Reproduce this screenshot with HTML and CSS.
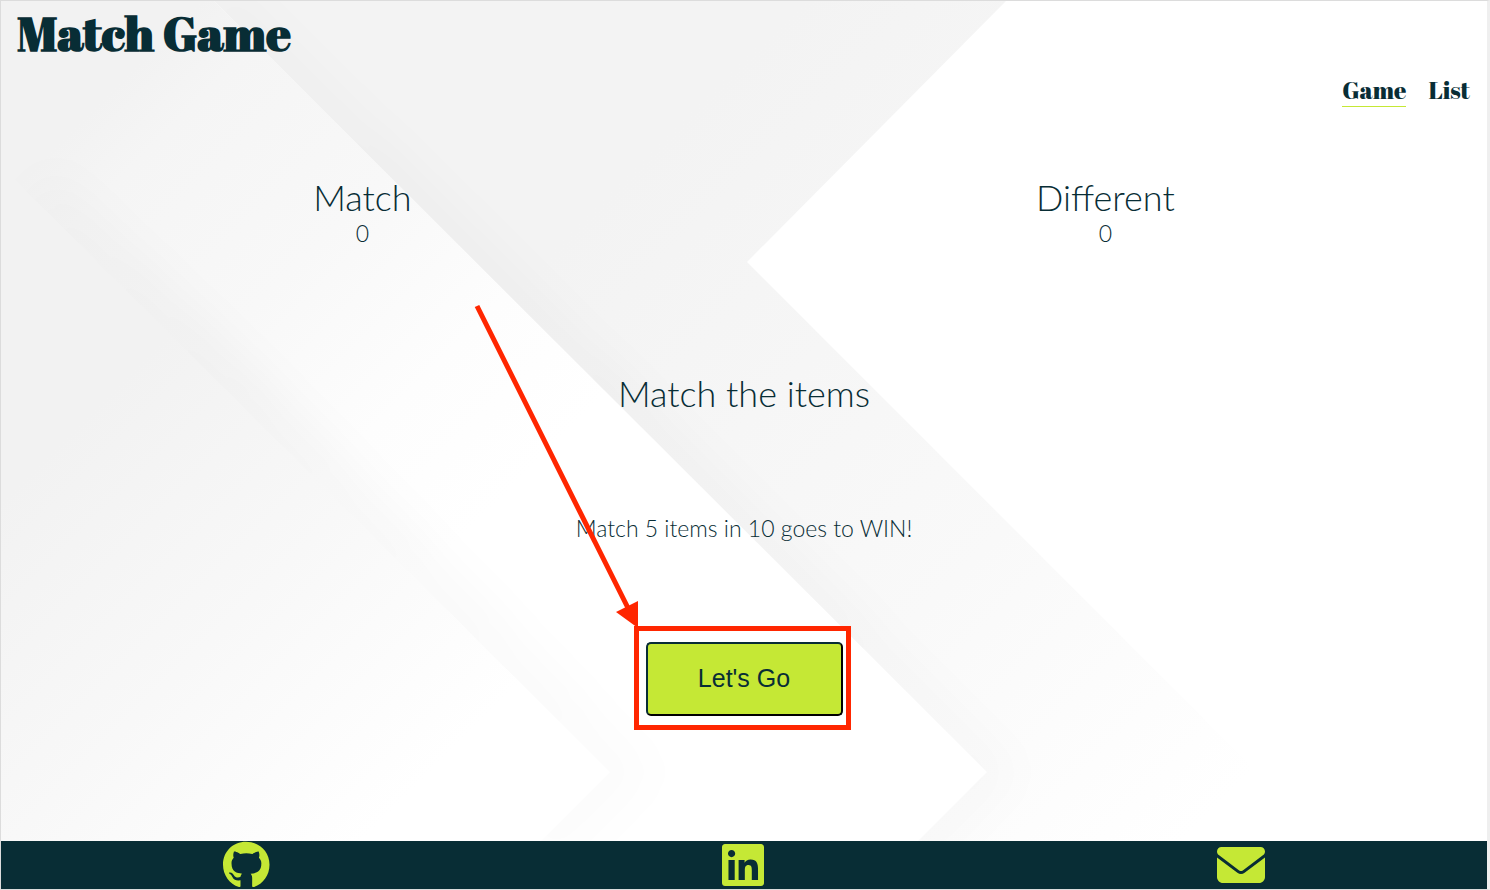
FILE: index.html
```html
<!DOCTYPE html>
<html lang="en">
<head>
<meta charset="utf-8">
<meta name="viewport" content="width=device-width, initial-scale=1">
<title>Match Game</title>
<link rel="stylesheet" href="styles.css">
</head>
<body>
<div class="page">
  <svg class="backdrop" viewBox="0 0 1486 840" preserveAspectRatio="xMidYMid slice" aria-hidden="true">
    <defs>
      <linearGradient id="base" gradientUnits="userSpaceOnUse" x1="250" y1="250" x2="600" y2="600">
        <stop offset="0" stop-color="#f2f2f2"/><stop offset=".5" stop-color="#f8f8f8"/><stop offset=".85" stop-color="#fdfdfd"/><stop offset="1" stop-color="#fff"/>
      </linearGradient>
      <linearGradient id="mid" gradientUnits="userSpaceOnUse" x1="100" y1="100" x2="500" y2="500">
        <stop offset="0" stop-color="#f2f2f2"/><stop offset=".12" stop-color="#f5f5f5"/><stop offset=".45" stop-color="#f8f8f8"/><stop offset=".75" stop-color="#fdfdfd"/><stop offset="1" stop-color="#fff"/>
      </linearGradient>
      <linearGradient id="top" gradientUnits="userSpaceOnUse" x1="400" y1="400" x2="1010" y2="1010">
        <stop offset="0" stop-color="#f3f3f3"/><stop offset=".2" stop-color="#f5f5f5"/><stop offset=".6" stop-color="#f9f9f9"/><stop offset="1" stop-color="#fff"/>
      </linearGradient>
      <linearGradient id="shadeLeft" gradientUnits="userSpaceOnUse" x1="20" y1="180" x2="640" y2="800">
        <stop offset="0" stop-color="#000" stop-opacity=".015"/><stop offset=".35" stop-color="#000" stop-opacity=".03"/><stop offset="1" stop-color="#000" stop-opacity=".01"/>
      </linearGradient>
      <linearGradient id="shadeRight" gradientUnits="userSpaceOnUse" x1="210" y1="0" x2="1000" y2="790">
        <stop offset="0" stop-color="#000" stop-opacity=".015"/><stop offset=".5" stop-color="#000" stop-opacity=".022"/><stop offset="1" stop-color="#000" stop-opacity=".015"/>
      </linearGradient>
      <filter id="soft" filterUnits="userSpaceOnUse" x="-100" y="-100" width="1700" height="1100"><feGaussianBlur stdDeviation="20"/></filter>
      <clipPath id="clipMid"><path d="M0 0H213L986 771 917 840H540L609 771 0 165Z"/></clipPath>
      <clipPath id="clipTop"><path d="M213 0H1005L746 261 1325 840H917L986 771Z"/></clipPath>
    </defs>
    <rect width="1486" height="840" fill="#fff"/>
    <path d="M0 0H213L609 771 540 840H0Z" fill="url(#base)"/>
    <path d="M0 0H213L986 771 917 840H540L609 771 0 165Z" fill="url(#mid)"/>
    <g clip-path="url(#clipMid)"><path d="M30 192 609 771 530 850" fill="none" stroke="url(#shadeLeft)" stroke-width="70" filter="url(#soft)"/></g>
    <path d="M213 0H1005L746 261 1325 840H917L986 771Z" fill="url(#top)"/>
    <g clip-path="url(#clipTop)"><path d="M213 0 986 771 910 850" fill="none" stroke="url(#shadeRight)" stroke-width="50" filter="url(#soft)"/></g>
  </svg>

  <header class="header">
    <h1 class="title">Match Game</h1>
    <nav class="nav" aria-label="Main">
      <a class="nav-link nav-link-active" href="#game" aria-current="page">Game</a>
      <a class="nav-link" href="#list">List</a>
    </nav>
  </header>

  <main class="main">
    <section class="scores" aria-label="Scores">
      <div class="score"><h2 class="heading">Match</h2><p class="text">0</p></div>
      <div class="score"><h2 class="heading">Different</h2><p class="text">0</p></div>
    </section>
    <section class="intro">
      <h2 class="heading">Match the items</h2>
      <p class="text">Match 5 items in 10 goes to WIN!</p>
      <div class="start">
        <button class="start-button" type="button">Let's Go</button>
        <span class="highlight"></span>
        <svg class="pointer" viewBox="0 0 170 326" aria-hidden="true">
          <path d="M7 3 158 305" stroke="#ff2600" stroke-width="5"/>
          <path d="M168 325 146 309 168 298Z" fill="#ff2600"/>
        </svg>
      </div>
    </section>
  </main>

  <footer class="footer">
    <a class="social" href="#github" aria-label="GitHub"><svg class="icon" viewBox="0 0 496 512"><path d="M244.8 8C106.1 8 0 113.3 0 252c0 110.9 69.8 205.8 169.5 239.2 12.8 2.3 17.3-5.6 17.3-12.1 0-6.2-.3-40.4-.3-61.4 0 0-70 15-84.7-29.8 0 0-11.4-29.1-27.8-36.6 0 0-22.9-15.7 1.6-15.4 0 0 24.9 2 38.6 25.8 21.9 38.6 58.6 27.5 72.9 20.9 2.3-16 8.8-27.1 16-33.7-55.9-6.2-112.3-14.3-112.3-110.5 0-27.5 7.6-41.3 23.6-58.9-2.6-6.5-11.1-33.3 2.6-67.9 20.9-6.5 69 27 69 27 20-5.6 41.5-8.5 62.8-8.5s42.8 2.9 62.8 8.5c0 0 48.1-33.6 69-27 13.7 34.7 5.2 61.4 2.6 67.9 16 17.7 25.8 31.5 25.8 58.9 0 96.5-58.9 104.2-114.8 110.5 9.2 7.9 17 22.9 17 46.4 0 33.7-.3 75.4-.3 83.6 0 6.5 4.6 14.4 17.3 12.1C428.2 457.8 496 362.9 496 252 496 113.3 383.5 8 244.8 8z"/></svg></a>
    <a class="social" href="#linkedin" aria-label="LinkedIn"><svg class="icon" viewBox="0 0 448 512"><path d="M416 32H31.9C14.3 32 0 46.5 0 64.3v383.4C0 465.5 14.3 480 31.9 480H416c17.6 0 32-14.5 32-32.3V64.3c0-17.8-14.4-32.3-32-32.3zM135.4 416H69V202.2h66.5V416zm-33.2-243c-21.3 0-38.5-17.3-38.5-38.5S80.9 96 102.2 96c21.2 0 38.5 17.3 38.5 38.5 0 21.3-17.2 38.5-38.5 38.5zm282.1 243h-66.4V312c0-24.8-.5-56.7-34.5-56.7-34.6 0-39.9 27-39.9 54.9V416h-66.4V202.2h63.7v29.2h.9c8.9-16.8 30.6-34.5 62.9-34.5 67.2 0 79.7 44.3 79.7 101.9V416z"/></svg></a>
    <a class="social" href="#email" aria-label="Email"><svg class="icon" viewBox="0 0 512 512"><path d="M48 64C21.5 64 0 85.5 0 112c0 15.1 7.1 29.3 19.2 38.4L236.8 313.6c11.4 8.5 27 8.5 38.4 0L492.8 150.4c12.1-9.1 19.2-23.3 19.2-38.4c0-26.5-21.5-48-48-48H48zM0 176V384c0 35.3 28.7 64 64 64H448c35.3 0 64-28.7 64-64V176L294.4 339.2c-22.8 17.1-54 17.1-76.8 0L0 176z"/></svg></a>
  </footer>
</div>
</body>
</html>
```

FILE: styles.css
```css
* { box-sizing: border-box; }

body { margin: 0; }

h1, h2, p { margin: 0; }

.page {
  position: relative;
  display: flex;
  flex-direction: column;
  min-height: 100vh;
  border: 1px solid #dcdcdc;
  border-right: 3px solid #efefef;
  color: #082d35;
  font-family: Lato, "Open Sans", sans-serif;
  font-weight: 300;
}

.backdrop {
  position: absolute;
  inset: 0;
  z-index: -1;
  width: 100%;
  height: calc(100% - 48px);
}

.header {
  display: flex;
  flex-direction: column;
  padding: 0 17px 0 16px;
  font-family: "Abril Fatface", "Liberation Serif", serif;
}

.title {
  font-size: 48px;
  font-weight: 700;
  line-height: 64px;
}

.nav {
  display: flex;
  justify-content: flex-end;
  gap: 22px;
  padding-top: 10px;
}

.nav-link {
  border-bottom: 1px solid transparent;
  color: inherit;
  font-size: 24px;
  font-weight: 400;
  line-height: 31px;
  text-decoration: none;
}

.nav-link-active { border-color: #c5e835; }

.main {
  display: flex;
  flex: 1;
  flex-direction: column;
  padding-top: 68px;
  text-align: center;
}

.scores {
  display: flex;
  justify-content: space-around;
}

.heading {
  font-size: 36px;
  font-weight: 300;
  line-height: 44px;
}

.text {
  font-size: 23px;
  line-height: 28px;
}

.intro {
  display: flex;
  flex-direction: column;
  align-items: center;
  padding-top: 124px;
}

.intro .text { padding-top: 99px; }

.start {
  position: relative;
  margin-top: 100px;
}

.start-button {
  width: 197px;
  height: 74px;
  padding-bottom: 3px;
  border: 2px solid;
  border-color: #082d35 #000 #000 #082d35;
  border-radius: 5px;
  background: #c5e835;
  color: #082d35;
  font-family: "Liberation Sans", Arial, sans-serif;
  font-size: 25px;
}

.highlight {
  position: absolute;
  inset: -16px -8px -14px -12px;
  border: 5px solid #ff2600;
  pointer-events: none;
}

.pointer {
  position: absolute;
  right: 203px;
  bottom: 87px;
  width: 170px;
  height: 326px;
  pointer-events: none;
}

.footer {
  display: flex;
  justify-content: space-around;
  gap: 8px;
  background: #082d35;
}

.social {
  display: flex;
  color: #c5e835;
}

.icon {
  height: 48px;
  fill: currentColor;
}
```
